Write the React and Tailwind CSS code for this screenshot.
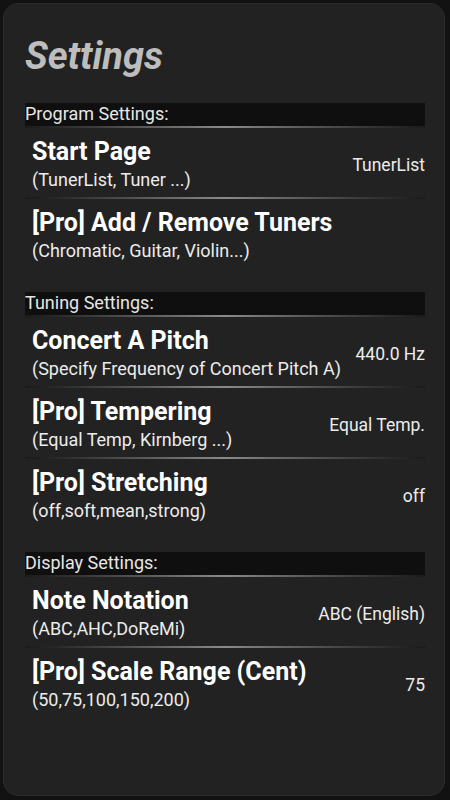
import React from "react";

const sections = [
  {
    label: "Program Settings:",
    items: [
      { title: "Start Page", sub: "(TunerList, Tuner ...)", value: "TunerList" },
      { title: "[Pro] Add / Remove Tuners", sub: "(Chromatic, Guitar, Violin...)", value: "" },
    ],
  },
  {
    label: "Tuning Settings:",
    items: [
      { title: "Concert A Pitch", sub: "(Specify Frequency of Concert Pitch A)", value: "440.0 Hz" },
      { title: "[Pro] Tempering", sub: "(Equal Temp, Kirnberg ...)", value: "Equal Temp." },
      { title: "[Pro] Stretching", sub: "(off,soft,mean,strong)", value: "off" },
    ],
  },
  {
    label: "Display Settings:",
    items: [
      { title: "Note Notation", sub: "(ABC,AHC,DoReMi)", value: "ABC (English)" },
      { title: "[Pro] Scale Range (Cent)", sub: "(50,75,100,150,200)", value: "75" },
    ],
  },
];

const Divider = () => (
  <div className="h-[2px] bg-gradient-to-r from-[#1a1a1a] via-[#8a8a8a] to-[#1a1a1a]" />
);

const Row = ({ item, last }) => (
  <div>
    <div className="flex h-[69px] justify-between pl-[7px]">
      <div className="pt-[10px]">
        <div className="text-[25px] leading-[28px] font-bold text-white">{item.title}</div>
        <div className="text-[18px] leading-[28px] text-[#ececec]">{item.sub}</div>
      </div>
      <div className="self-center pt-[4px] text-[17.5px] leading-[22px] text-[#ececec] whitespace-nowrap">
        {item.value}
      </div>
    </div>
    {!last && <Divider />}
  </div>
);

const App = () => {
  return (
    <div
      className="w-[450px] h-[800px] bg-[#121212] p-[3px] pr-[5px] pb-[4px]"
      style={{ fontFamily: "Roboto, 'Liberation Sans', sans-serif" }}
    >
      <div className="h-full rounded-[15px] bg-[#222222] border border-[#2a2a2a] pl-[21px] pr-[19px]">
        <h1 className="pt-[30px] text-[38px] leading-[44px] font-bold italic text-[#bdbdbd]">
          Settings
        </h1>
        <div className="mt-[25px] flex flex-col gap-[24px]">
          {sections.map((s) => (
            <div key={s.label}>
              <div className="bg-[#0f0f0f]">
                <div className="h-[23px] text-[18px] leading-[22px] text-[#e6e6e6]">
                  {s.label}
                </div>
                <Divider />
              </div>
              {s.items.map((it, i) => (
                <Row key={it.title} item={it} last={i === s.items.length - 1} />
              ))}
            </div>
          ))}
        </div>
      </div>
    </div>
  );
};

export default App;
